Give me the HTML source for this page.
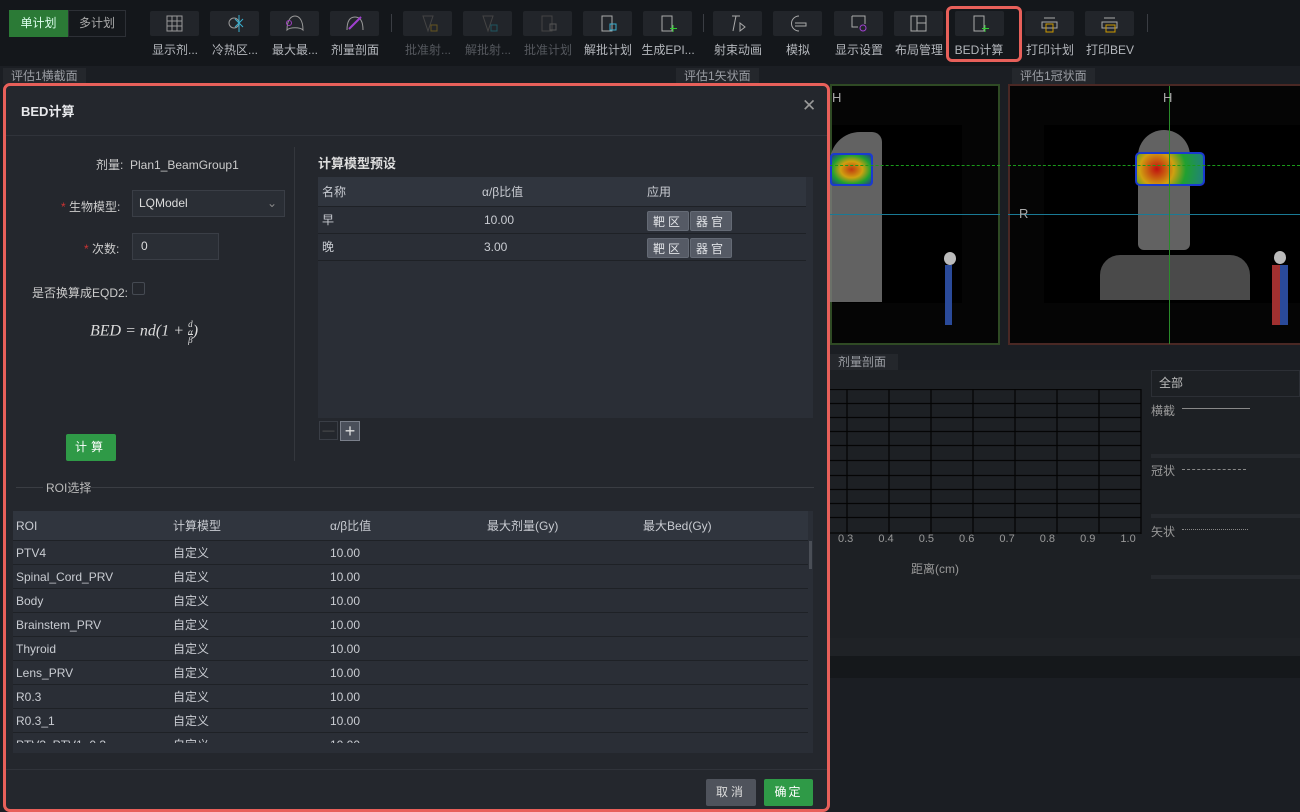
<!DOCTYPE html>
<html><head><meta charset="utf-8"><style>
*{box-sizing:border-box;margin:0;padding:0}
body{width:1300px;height:812px;background:#1b1e23;font-family:"Liberation Sans","Noto Sans CJK SC",sans-serif;color:#c9ccd2;font-size:12px;position:relative;overflow:hidden}
.a{position:absolute}
.tb{background:#14171b;left:0;top:0;width:1300px;height:66px}
.btn{position:absolute;top:11px;width:49px;height:25px;background:#22252a;border-radius:2px}
.lbl{position:absolute;top:41px;font-size:12px;color:#b4b7bc;white-space:nowrap;text-align:center;width:70px}
.dim{color:#55585e}
.sep{position:absolute;top:14px;width:1px;height:18px;background:#3a3d43}
.tab{position:absolute;top:68px;height:16px;background:#24272c;color:#9a9da3;font-size:12px;line-height:16px;padding:0 8px;white-space:nowrap}
.dlg{left:3px;top:83px;width:827px;height:729px;border:3px solid #e8605a;border-radius:7px;background:#24272d}
.row{position:absolute;left:0;width:100%;border-bottom:1px solid #1e2126}
.cell{position:absolute;top:0;white-space:nowrap}
.gbtn{background:#2f9a47;color:#fff;text-align:center;border-radius:2px;position:absolute}
.sbtn{position:absolute;height:20px;background:#555a65;color:#e0e2e6;text-align:center;line-height:20px;border-radius:2px;letter-spacing:3px;font-size:12px;border:1px solid #646a75}
</style></head><body>
<div class="a tb"></div>
<div class="a" style="left:9px;top:10px;width:59px;height:27px;background:#2b7a36;color:#dfe;line-height:27px;text-align:center">单计划</div>
<div class="a" style="left:68px;top:10px;width:58px;height:27px;border:1px solid #2d3036;background:#15181c;color:#aaa;line-height:25px;text-align:center">多计划</div>

<div class="btn" style="left:150px"><svg width="49" height="25"><g stroke="#999" fill="none"><rect x="17" y="5" width="15" height="15"/><path d="M22 5v15M27 5v15M17 10h15M17 15h15"/></g></svg></div>
<div class="lbl" style="left:140px">显示剂...</div>
<div class="btn" style="left:210px"><svg width="49" height="25"><circle cx="24" cy="12" r="5" fill="none" stroke="#999"/><path d="M29 4v17M25 8l8 8M33 8l-8 8" stroke="#3ab0d0"/></svg></div>
<div class="lbl" style="left:200px">冷热区...</div>
<div class="btn" style="left:270px"><svg width="49" height="25"><path d="M17 19c0-10 4-14 8-14s8 4 8 14c-3-3-13-3-16 0z" fill="none" stroke="#999"/><circle cx="19" cy="12" r="2.5" fill="none" stroke="#a040c0"/></svg></div>
<div class="lbl" style="left:260px">最大最...</div>
<div class="btn" style="left:330px"><svg width="49" height="25"><path d="M17 19c0-9 3-13 8-13s8 4 8 13" fill="none" stroke="#999"/><path d="M19 18l12-12" stroke="#a040d0" stroke-width="2"/></svg></div>
<div class="lbl" style="left:320px">剂量剖面</div>
<div class="sep" style="left:391px"></div>
<div class="btn" style="left:403px"><svg width="49" height="25"><path d="M20 5h10l-5 15z" fill="none" stroke="#444"/><rect x="28" y="14" width="6" height="6" fill="none" stroke="#665520"/></svg></div>
<div class="lbl dim" style="left:393px">批准射...</div>
<div class="btn" style="left:463px"><svg width="49" height="25"><path d="M20 5h10l-5 15z" fill="none" stroke="#444"/><rect x="28" y="14" width="6" height="6" fill="none" stroke="#1f5560"/></svg></div>
<div class="lbl dim" style="left:453px">解批射...</div>
<div class="btn" style="left:523px"><svg width="49" height="25"><rect x="19" y="5" width="10" height="15" fill="none" stroke="#444"/><rect x="27" y="13" width="6" height="6" fill="none" stroke="#555"/></svg></div>
<div class="lbl dim" style="left:513px">批准计划</div>
<div class="btn" style="left:583px"><svg width="49" height="25"><rect x="19" y="5" width="10" height="15" fill="none" stroke="#aaa"/><rect x="27" y="13" width="6" height="6" fill="none" stroke="#3ab0d0"/></svg></div>
<div class="lbl" style="left:573px">解批计划</div>
<div class="btn" style="left:643px"><svg width="49" height="25"><rect x="19" y="5" width="10" height="15" fill="none" stroke="#aaa"/><path d="M30 14v7M27 17.5h7" stroke="#3c3"/></svg></div>
<div class="lbl" style="left:633px">生成EPI...</div>
<div class="sep" style="left:703px"></div>
<div class="btn" style="left:713px"><svg width="49" height="25"><path d="M19 5h8M23 5l-3 15M27 12l5 4-5 4z" fill="none" stroke="#aaa"/></svg></div>
<div class="lbl" style="left:703px">射束动画</div>
<div class="btn" style="left:773px"><svg width="49" height="25"><path d="M26 5a7 7 0 0 0 0 15M22 12h11v3H22" fill="none" stroke="#aaa"/></svg></div>
<div class="lbl" style="left:763px">模拟</div>
<div class="btn" style="left:834px"><svg width="49" height="25"><path d="M18 5h13v8M18 5v11h6" fill="none" stroke="#aaa"/><circle cx="29" cy="17" r="3" fill="none" stroke="#a040d0"/></svg></div>
<div class="lbl" style="left:824px">显示设置</div>
<div class="btn" style="left:894px"><svg width="49" height="25"><rect x="17" y="5" width="15" height="15" fill="none" stroke="#aaa"/><path d="M23 5v15M23 12h9" stroke="#aaa"/></svg></div>
<div class="lbl" style="left:884px">布局管理</div>
<div class="btn" style="left:955px"><svg width="49" height="25"><rect x="19" y="5" width="10" height="15" fill="none" stroke="#aaa"/><path d="M30 14v7M27 17.5h7" stroke="#3c3"/></svg></div>
<div class="lbl" style="left:944px">BED计算</div>
<div class="a" style="left:946px;top:6px;width:76px;height:56px;border:3px solid #e8605a;border-radius:6px"></div>
<div class="sep" style="left:1030px"></div>
<div class="btn" style="left:1025px"><svg width="49" height="25"><path d="M19 7h11M17 11h15v6H17z" fill="none" stroke="#aaa"/><rect x="21" y="13" width="7" height="8" fill="none" stroke="#c90"/></svg></div>
<div class="lbl" style="left:1015px">打印计划</div>
<div class="btn" style="left:1085px"><svg width="49" height="25"><path d="M19 7h11M17 11h15v6H17z" fill="none" stroke="#aaa"/><rect x="21" y="14" width="9" height="7" fill="none" stroke="#c90"/></svg></div>
<div class="lbl" style="left:1075px">打印BEV</div>
<div class="sep" style="left:1147px"></div>

<div class="tab" style="left:3px">评估1横截面</div>
<div class="tab" style="left:676px">评估1矢状面</div>
<div class="tab" style="left:1012px">评估1冠状面</div>

<!-- sagittal -->
<div class="a" style="left:830px;top:84px;width:170px;height:261px;background:#050505;border:2px solid #2f4a24"></div>
<div class="a" style="left:832px;top:125px;width:130px;height:178px;background:#000"></div>
<div class="a" style="left:830px;top:132px;width:52px;height:170px;background:#7a7a7a;border-radius:30px 10px 0 0;opacity:.8"></div>
<div class="a" style="left:830px;top:153px;width:43px;height:33px;border:2px solid #1a3ad0;background:radial-gradient(#c03a10,#d0a010 40%,#20a030 70%,#204090);border-radius:4px"></div>
<div class="a" style="left:830px;top:165px;width:170px;border-top:1px dashed #1a9a1a"></div>
<div class="a" style="left:830px;top:214px;width:170px;border-top:1px solid #1a7a95"></div>
<div class="a" style="left:944px;top:252px;width:12px;height:13px;background:#bbb;border-radius:50%"></div>
<div class="a" style="left:945px;top:265px;width:7px;height:60px;background:#2a4a9a"></div>
<div class="a" style="left:832px;top:90px;color:#aaa;font-size:13px">H</div>
<!-- coronal -->
<div class="a" style="left:1008px;top:84px;width:292px;height:261px;background:#050505;border:2px solid #4a2824;border-right:none"></div>
<div class="a" style="left:1044px;top:125px;width:256px;height:178px;background:#000"></div>
<div class="a" style="left:1138px;top:130px;width:52px;height:120px;background:#7a7a7a;border-radius:26px 26px 6px 6px;opacity:.8"></div>
<div class="a" style="left:1100px;top:255px;width:150px;height:45px;background:#6a6a6a;border-radius:20px 20px 0 0;opacity:.7"></div>
<div class="a" style="left:1135px;top:152px;width:70px;height:34px;border:2px solid #1a3ad0;background:radial-gradient(circle at 30% 50%,#c01010,#d0a010 35%,#20a030 60%,#208080);border-radius:5px"></div>
<div class="a" style="left:1008px;top:165px;width:292px;border-top:1px dashed #1a9a1a"></div>
<div class="a" style="left:1008px;top:214px;width:292px;border-top:1px solid #1a7a95"></div>
<div class="a" style="left:1169px;top:86px;height:258px;border-left:1px solid #2a8a2a"></div>
<div class="a" style="left:1163px;top:90px;color:#aaa;font-size:13px">H</div>
<div class="a" style="left:1019px;top:206px;color:#aaa;font-size:13px">R</div>
<div class="a" style="left:1274px;top:251px;width:12px;height:13px;background:#bbb;border-radius:50%"></div>
<div class="a" style="left:1272px;top:265px;width:8px;height:60px;background:#a03030"></div>
<div class="a" style="left:1280px;top:265px;width:8px;height:60px;background:#2a4a9a"></div>

<!-- bottom right -->
<div class="a" style="left:830px;top:354px;width:68px;height:16px;background:#24272c;color:#9a9da3;line-height:16px;padding-left:8px">剂量剖面</div>
<div class="a" style="left:830px;top:370px;width:470px;height:268px;background:#1d2024"></div>
<svg class="a" style="left:830px;top:389px" width="312" height="146"><g stroke="#050505" stroke-width="1.3"><path d="M0 0.5h311M0 14.5h311M0 28.5h311M0 42.5h311M0 56.5h311M0 71.5h311M0 86.5h311M0 100.5h311M0 114.5h311M0 128.5h311M0 144h311"/><path d="M17 0v145M59 0v145M101 0v145M143 0v145M185 0v145M227 0v145M269 0v145M311 0v145"/></g></svg>
<div class="a" style="left:838px;top:533px;font-size:11px;color:#999;word-spacing:22px;white-space:nowrap">0.3 0.4 0.5 0.6 0.7 0.8 0.9 1.0</div>
<div class="a" style="left:911px;top:560px;color:#999">距离(cm)</div>
<div class="a" style="left:1151px;top:370px;width:149px;height:27px;border:1px solid #2c2f35;color:#bbb;line-height:25px;padding-left:7px">全部</div>
<div class="a" style="left:1151px;top:402px;color:#999">横截</div><div class="a" style="left:1182px;top:408px;width:68px;border-top:1px solid #888"></div>
<div class="a" style="left:1151px;top:454px;width:149px;height:4px;background:#26292e"></div>
<div class="a" style="left:1151px;top:462px;color:#999">冠状</div><div class="a" style="left:1182px;top:469px;width:64px;border-top:1px dashed #888"></div>
<div class="a" style="left:1151px;top:514px;width:149px;height:4px;background:#26292e"></div>
<div class="a" style="left:1151px;top:523px;color:#999">矢状</div><div class="a" style="left:1182px;top:529px;width:66px;border-top:1px dotted #888"></div>
<div class="a" style="left:1151px;top:575px;width:149px;height:4px;background:#26292e"></div>
<div class="a" style="left:830px;top:638px;width:470px;height:18px;background:#1f2226"></div>
<div class="a" style="left:830px;top:656px;width:470px;height:22px;background:#15181b"></div>

<!-- dialog -->
<div class="a dlg">
 <div class="a" style="left:15px;top:15px;font-size:13px;font-weight:bold;color:#e8e9ec">BED计算</div>
 <div class="a" style="left:796px;top:10px;font-size:17px;color:#999">✕</div>
 <div class="a" style="left:0;top:49px;width:821px;border-top:1px solid #30333a"></div>
 <div class="a" style="left:90px;top:70px;color:#ccc">剂量:&nbsp; Plan1_BeamGroup1</div>
 <div class="a" style="left:55px;top:112px;color:#ccc"><span style="color:#c33">* </span>生物模型:</div>
 <div class="a" style="left:126px;top:104px;width:153px;height:27px;border:1px solid #3a3e46;background:#2a2e35;color:#ddd;line-height:25px;padding-left:6px">LQModel<span style="position:absolute;right:7px;color:#888">&#8964;</span></div>
 <div class="a" style="left:78px;top:154px;color:#ccc"><span style="color:#c33">* </span>次数:</div>
 <div class="a" style="left:126px;top:147px;width:87px;height:27px;border:1px solid #3a3e46;background:#2a2e35;color:#ddd;line-height:25px;padding-left:8px">0</div>
 <div class="a" style="left:26px;top:198px;color:#ccc">是否换算成EQD2:</div>
 <div class="a" style="left:126px;top:196px;width:13px;height:13px;border:1px solid #454a52;border-radius:2px"></div>
 <div class="a" style="left:84px;top:234px;font-family:'Liberation Serif',serif;font-style:italic;font-size:16px;color:#ddd">BED = nd(1 + <span style="display:inline-block;font-size:9px;line-height:8px;vertical-align:middle;text-align:center">d<br>α<br><span style="border-top:1px solid #ddd">β</span></span>)</div>
 <div class="gbtn" style="left:60px;top:348px;width:50px;height:27px;line-height:27px;letter-spacing:4px">计算</div>
 <div class="a" style="left:288px;top:61px;height:314px;border-left:1px solid #34373d"></div>

 <div class="a" style="left:312px;top:67px;font-weight:bold;color:#ddd;font-size:13px">计算模型预设</div>
 <div class="a" style="left:312px;top:91px;width:495px;height:241px;background:#2a2e36">
  <div class="row" style="top:0;height:30px;background:#30353e;width:488px"><span class="cell" style="left:4px;line-height:30px">名称</span><span class="cell" style="left:164px;line-height:30px">α/β比值</span><span class="cell" style="left:329px;line-height:30px">应用</span></div>
  <div class="row" style="top:30px;height:27px;width:488px"><span class="cell" style="left:4px;line-height:27px">早</span><span class="cell" style="left:166px;line-height:27px">10.00</span></div>
  <div class="row" style="top:57px;height:27px;width:488px"><span class="cell" style="left:4px;line-height:27px">晚</span><span class="cell" style="left:166px;line-height:27px">3.00</span></div>
  <div class="sbtn" style="left:329px;top:34px;width:42px">靶区</div><div class="sbtn" style="left:372px;top:34px;width:42px">器官</div>
  <div class="sbtn" style="left:329px;top:61px;width:42px">靶区</div><div class="sbtn" style="left:372px;top:61px;width:42px">器官</div>
 </div>
 <div class="a" style="left:313px;top:335px;width:19px;height:19px;border:1px solid #3a3e46;color:#555;text-align:center;line-height:16px">—</div>
 <div class="a" style="left:334px;top:335px;width:20px;height:20px;border:1px solid #7a7f8a;background:#4a4f5a;color:#ddd;text-align:center;line-height:18px;font-size:18px">+</div>

 <div class="a" style="left:10px;top:401px;width:27px;border-top:1px solid #3a3d43"></div>
 <div class="a" style="left:40px;top:393px;color:#bbb">ROI选择</div>
 <div class="a" style="left:82px;top:401px;width:726px;border-top:1px solid #3a3d43"></div>

 <div class="a" style="left:7px;top:425px;width:800px;height:242px;background:#2a2e36;overflow:hidden">
  <div class="row" style="top:0;height:30px;background:#30353e;width:795px"><span class="cell" style="left:3px;line-height:30px">ROI</span><span class="cell" style="left:160px;line-height:30px">计算模型</span><span class="cell" style="left:317px;line-height:30px">α/β比值</span><span class="cell" style="left:474px;line-height:30px">最大剂量(Gy)</span><span class="cell" style="left:630px;line-height:30px">最大Bed(Gy)</span></div>
  <div class="row" style="top:30px;height:24px;width:795px"><span class="cell" style="left:3px;line-height:24px">PTV4</span><span class="cell" style="left:160px;line-height:24px">自定义</span><span class="cell" style="left:317px;line-height:24px">10.00</span></div>
  <div class="row" style="top:54px;height:24px;width:795px"><span class="cell" style="left:3px;line-height:24px">Spinal_Cord_PRV</span><span class="cell" style="left:160px;line-height:24px">自定义</span><span class="cell" style="left:317px;line-height:24px">10.00</span></div>
  <div class="row" style="top:78px;height:24px;width:795px"><span class="cell" style="left:3px;line-height:24px">Body</span><span class="cell" style="left:160px;line-height:24px">自定义</span><span class="cell" style="left:317px;line-height:24px">10.00</span></div>
  <div class="row" style="top:102px;height:24px;width:795px"><span class="cell" style="left:3px;line-height:24px">Brainstem_PRV</span><span class="cell" style="left:160px;line-height:24px">自定义</span><span class="cell" style="left:317px;line-height:24px">10.00</span></div>
  <div class="row" style="top:126px;height:24px;width:795px"><span class="cell" style="left:3px;line-height:24px">Thyroid</span><span class="cell" style="left:160px;line-height:24px">自定义</span><span class="cell" style="left:317px;line-height:24px">10.00</span></div>
  <div class="row" style="top:150px;height:24px;width:795px"><span class="cell" style="left:3px;line-height:24px">Lens_PRV</span><span class="cell" style="left:160px;line-height:24px">自定义</span><span class="cell" style="left:317px;line-height:24px">10.00</span></div>
  <div class="row" style="top:174px;height:24px;width:795px"><span class="cell" style="left:3px;line-height:24px">R0.3</span><span class="cell" style="left:160px;line-height:24px">自定义</span><span class="cell" style="left:317px;line-height:24px">10.00</span></div>
  <div class="row" style="top:198px;height:24px;width:795px"><span class="cell" style="left:3px;line-height:24px">R0.3_1</span><span class="cell" style="left:160px;line-height:24px">自定义</span><span class="cell" style="left:317px;line-height:24px">10.00</span></div>
  <div class="row" style="top:222px;height:10px;width:795px;overflow:hidden;border:none"><span class="cell" style="left:3px;line-height:24px">PTV3_PTV1_0.3</span><span class="cell" style="left:160px;line-height:24px">自定义</span><span class="cell" style="left:317px;line-height:24px">10.00</span></div>
  <div class="a" style="left:796px;top:30px;width:3px;height:28px;background:#4a4e56"></div>
 </div>
 <div class="a" style="left:0;top:683px;width:821px;border-top:1px solid #30333a"></div>
 <div class="a" style="left:700px;top:693px;width:50px;height:27px;background:#4f535c;color:#ddd;text-align:center;line-height:27px;letter-spacing:3px;border-radius:2px">取消</div>
 <div class="gbtn" style="left:758px;top:693px;width:49px;height:27px;line-height:27px;letter-spacing:2px">确定</div>
</div>
</body></html>
